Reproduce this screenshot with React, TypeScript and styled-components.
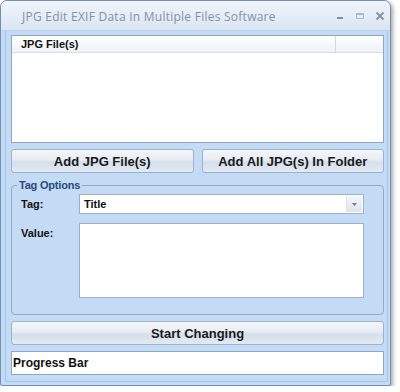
import React from 'react';
import styled, { createGlobalStyle } from 'styled-components';

const GlobalStyle = createGlobalStyle`
  html, body {
    margin: 0;
    padding: 0;
    background: #ffffff;
    font-family: "Liberation Sans", Arial, sans-serif;
  }
`;

const Window = styled.div`
  width: 391px;
  height: 386px;
  display: flex;
  flex-direction: column;
  border: 1px solid #6f8fb5;
  border-radius: 7px 7px 2px 2px;
  background: #c4dbf5;
  box-shadow: 2px 2px 4px rgba(0, 0, 0, 0.35);
  overflow: hidden;
  box-sizing: border-box;
`;

const TitleBar = styled.div`
  height: 29px;
  flex: none;
  display: flex;
  align-items: center;
  padding: 0 4px 0 21px;
  background: linear-gradient(#f1f5fb, #e3ebf6 60%, #d9e5f3);
  border-bottom: 1px solid #c0d2e8;
`;

const Title = styled.div`
  flex: 1;
  color: #8592a1;
  font-family: "Open Sans", "DejaVu Sans", sans-serif;
  font-size: 12px;
  letter-spacing: 0.25px;
  margin-top: 1px;
`;

const Controls = styled.div`
  display: flex;
  align-items: center;
  gap: 8px;
`;

const CtrlBtn = styled.div`
  width: 12px;
  height: 12px;
  display: flex;
  align-items: center;
  justify-content: center;
`;

const Client = styled.div`
  flex: 1;
  display: flex;
  flex-direction: column;
  gap: 6px;
  margin: 0 2px 3px 4px;
  padding: 4px 3px 6px 5px;
  border: 1px solid #a9c5e6;
  border-top: none;
`;

const ListBox = styled.div`
  height: 108px;
  flex: none;
  box-sizing: border-box;
  background: #ffffff;
  border: 1px solid #8fa7c4;
  display: flex;
  flex-direction: column;
`;

const ListHeader = styled.div`
  height: 16px;
  display: flex;
  background: linear-gradient(#ffffff, #eef2f7);
  border-bottom: 1px solid #d5dde8;
`;

const HeaderCell = styled.div<{ $w?: number }>`
  ${(p) => (p.$w ? `width: ${p.$w}px;` : 'flex: 1;')}
  font-size: 11px;
  font-weight: bold;
  color: #111;
  padding: 2px 0 0 9px;
  box-sizing: border-box;
  border-right: ${(p) => (p.$w ? '1px solid #d0d8e2' : 'none')};
`;

const ButtonRow = styled.div`
  display: flex;
  gap: 8px;
`;

const Button = styled.button`
  flex: 1;
  height: 24px;
  border: 1px solid #9cb2cc;
  border-radius: 3px;
  background: linear-gradient(#f4f7fb, #e6ecf3 45%, #d5dfeb 55%, #e2e9f2);
  font-family: "Liberation Sans", Arial, sans-serif;
  font-size: 13px;
  font-weight: bold;
  color: #1a1a1a;
  padding: 0;
  cursor: pointer;
`;

const WideButton = styled(Button)`
  flex: none;
`;

const Group = styled.fieldset`
  margin: 0;
  padding: 3px 19px 14px 4px;
  border: 1px solid #8eaacc;
  border-radius: 4px;
  height: 136px;
  flex: none;
  box-sizing: border-box;
  display: flex;
  flex-direction: column;
  gap: 9px;
`;

const Legend = styled.legend`
  font-size: 11px;
  font-weight: bold;
  color: #264a7a;
  padding: 0 2px;
  margin-left: 1px;
  letter-spacing: -0.2px;
`;

const FieldRow = styled.div`
  display: flex;
  align-items: flex-start;
  padding-left: 5px;
`;

const FieldLabel = styled.div`
  width: 58px;
  font-size: 11px;
  font-weight: bold;
  color: #111;
  padding-top: 4px;
`;

const Combo = styled.div`
  flex: 1;
  height: 20px;
  box-sizing: border-box;
  background: #fff;
  border: 1px solid #9cb0c8;
  display: flex;
  align-items: center;
  font-size: 11px;
  font-weight: bold;
  color: #111;
  padding-left: 4px;
`;

const ComboText = styled.div`
  flex: 1;
`;

const ComboArrow = styled.div`
  width: 15px;
  height: 16px;
  margin-right: 1px;
  background: linear-gradient(#f4f6f9, #dde3ea);
  border-left: 1px solid #dfe5ec;
  display: flex;
  align-items: center;
  justify-content: center;
`;

const TextArea = styled.div`
  flex: 1;
  height: 75px;
  box-sizing: border-box;
  background: #fff;
  border: 1px solid #9cb0c8;
`;

const Progress = styled.div`
  height: 24px;
  flex: none;
  box-sizing: border-box;
  background: #fff;
  border: 1px solid #8fa7c4;
  display: flex;
  align-items: center;
  padding-left: 1px;
  font-size: 12px;
  font-weight: bold;
  color: #111;
`;

const App: React.FC = () => {
  return (
    <>
      <GlobalStyle />
      <Window>
        <TitleBar>
          <Title>JPG Edit EXIF Data In Multiple Files Software</Title>
          <Controls>
            <CtrlBtn>
              <svg width="10" height="10" viewBox="0 0 10 10">
                <rect x="2" y="6" width="6" height="2" fill="#7f91a6" />
              </svg>
            </CtrlBtn>
            <CtrlBtn>
              <svg width="10" height="10" viewBox="0 0 10 10">
                <rect x="1.5" y="2.5" width="7" height="5" fill="none" stroke="#a9b8ca" />
                <rect x="1" y="2" width="8" height="2" fill="#a9b8ca" />
              </svg>
            </CtrlBtn>
            <CtrlBtn>
              <svg width="10" height="10" viewBox="0 0 10 10">
                <path d="M1.5 1.5 L8.5 8.5 M8.5 1.5 L1.5 8.5" stroke="#7f91a6" strokeWidth="1.8" />
              </svg>
            </CtrlBtn>
          </Controls>
        </TitleBar>
        <Client>
          <ListBox>
            <ListHeader>
              <HeaderCell $w={324}>JPG File(s)</HeaderCell>
              <HeaderCell />
            </ListHeader>
          </ListBox>
          <ButtonRow>
            <Button>Add JPG File(s)</Button>
            <Button>Add All JPG(s) In Folder</Button>
          </ButtonRow>
          <Group>
            <Legend>Tag Options</Legend>
            <FieldRow>
              <FieldLabel>Tag:</FieldLabel>
              <Combo>
                <ComboText>Title</ComboText>
                <ComboArrow>
                  <svg width="5" height="3" viewBox="0 0 5 3">
                    <path d="M0 0 L5 0 L2.5 3 Z" fill="#6b7a8c" />
                  </svg>
                </ComboArrow>
              </Combo>
            </FieldRow>
            <FieldRow>
              <FieldLabel>Value:</FieldLabel>
              <TextArea />
            </FieldRow>
          </Group>
          <WideButton>Start Changing</WideButton>
          <Progress>Progress Bar</Progress>
        </Client>
      </Window>
    </>
  );
};

export default App;
